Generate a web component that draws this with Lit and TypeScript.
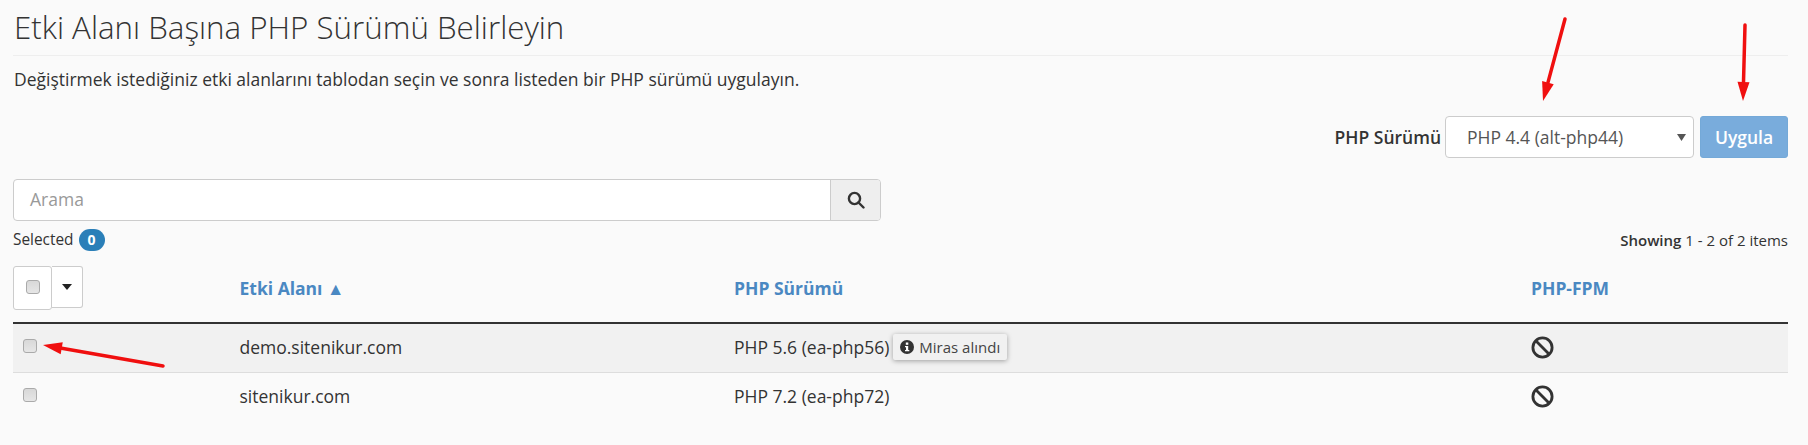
import { LitElement, html, css, svg } from 'lit';
import { customElement, state } from 'lit/decorators.js';

interface DomainRow {
  domain: string;
  version: string;
  inherited: boolean;
}

const ROWS: DomainRow[] = [
  { domain: 'demo.sitenikur.com', version: 'PHP 5.6 (ea-php56)', inherited: true },
  { domain: 'sitenikur.com', version: 'PHP 7.2 (ea-php72)', inherited: false },
];

// red annotation arrows drawn on top of the screenshot: [x1, y1, x2, y2] tail to tip
const ARROWS = [
  [1565, 19, 1543, 101],
  [1745, 25, 1743, 101],
  [163, 366, 43, 345],
];

@customElement('app-root')
export class AppRoot extends LitElement {
  static styles = css`
    :host {
      display: block;
      position: relative;
      height: 445px;
      overflow: hidden;
      background: #fafafa;
      color: #333;
      font-family: 'Open Sans', 'Noto Sans', sans-serif;
      font-size: 17.5px;
      line-height: 22px;
    }

    .page {
      padding: 0 20px 0 13px;
    }

    h1 {
      margin: 0;
      padding: 7px 0 0 1px;
      height: 48px;
      font-size: 31.3px;
      line-height: 40px;
      font-weight: 300;
      border-bottom: 1px solid #eee;
      box-sizing: content-box;
    }

    .intro {
      margin: 12px 0 0 1px;
      height: 22px;
    }

    .apply-row {
      display: flex;
      justify-content: flex-end;
      align-items: center;
      margin-top: 26px;
      height: 42px;
    }

    .apply-row label {
      font-weight: 600;
      margin-right: 4px;
    }

    .select-wrap {
      position: relative;
      display: block;
      margin-right: 6px;
    }

    select {
      display: block;
      appearance: none;
      width: 249px;
      height: 42px;
      padding: 0 20px 0 21px;
      border: 1px solid #ccc;
      border-radius: 4px;
      background: #fff;
      color: #555;
      font: inherit;
    }

    .select-wrap svg {
      position: absolute;
      right: 8px;
      top: 18px;
    }

    .apply {
      width: 88px;
      height: 42px;
      border: 1px solid #74a9d8;
      border-radius: 3px;
      background: #79acdc;
      color: #fff;
      font: inherit;
      font-weight: 600;
      padding: 0;
    }

    .search {
      display: flex;
      width: 868px;
      height: 42px;
      margin-top: 21px;
      border: 1px solid #ccc;
      border-radius: 4px;
      box-sizing: border-box;
      background: #fff;
    }

    .search .field {
      flex: 1;
      padding: 0 16px;
      line-height: 38px;
      color: #999;
    }

    .search .go {
      display: flex;
      align-items: center;
      justify-content: center;
      width: 49px;
      border-left: 1px solid #ccc;
      border-radius: 0 3px 3px 0;
      background: #eee;
    }

    .status {
      display: flex;
      justify-content: space-between;
      align-items: center;
      height: 22px;
      margin-top: 8px;
      font-size: 15px;
    }

    .status b {
      font-weight: 600;
    }

    .selected {
      display: flex;
      align-items: center;
      gap: 5px;
      font-size: 15.4px;
    }

    .badge {
      display: inline-block;
      width: 26px;
      height: 22px;
      border-radius: 11px;
      background: #2a7fb8;
      color: #fff;
      font-size: 14px;
      font-weight: 700;
      line-height: 22px;
      text-align: center;
    }

    .grid-row {
      display: grid;
      grid-template-columns: 226.5px 494.5px 797px 1fr;
    }

    .head {
      height: 73px;
      padding-top: 15px;
      box-sizing: border-box;
      border-bottom: 2px solid #333;
    }

    .head a {
      display: block;
      margin-top: 11px;
      color: #4a88c2;
      font-weight: 700;
      text-decoration: none;
    }

    .bulk {
      display: flex;
      width: 70px;
      height: 42px;
    }

    .bulk .all {
      display: flex;
      justify-content: center;
      padding-top: 13px;
      width: 39px;
      height: 44px;
      box-sizing: border-box;
      border: 1px solid #ccc;
      border-radius: 3px;
      background: #fff;
    }

    .bulk .menu {
      display: flex;
      align-items: center;
      justify-content: center;
      width: 31px;
      height: 42px;
      box-sizing: border-box;
      border: 1px solid #ccc;
      border-left: 0;
      border-radius: 0 3px 3px 0;
      background: #fff;
    }

    .row {
      height: 49px;
      box-sizing: border-box;
      border-bottom: 1px solid #ddd;
      align-items: start;
    }

    .row.shaded {
      background: #f1f1f1;
    }

    .row.last {
      border-bottom: 0;
    }

    .row > div {
      padding-top: 12px;
    }

    .row .tick {
      padding: 15px 0 0 10px;
    }

    input[type='checkbox'] {
      display: block;
      appearance: none;
      width: 14px;
      height: 14px;
      margin: 0;
      border: 1px solid #aaa;
      border-radius: 3px;
      background: linear-gradient(#d8d8d8, #e6e6e6);
    }

    .version {
      display: flex;
      align-items: flex-start;
    }

    .tag {
      position: relative;
      top: -2px;
      display: flex;
      align-items: center;
      gap: 5px;
      height: 26px;
      margin-left: 4px;
      padding: 0 7px;
      border-radius: 2px;
      background: #f1f1f1;
      box-shadow: 0 1px 5px rgba(0, 0, 0, 0.35);
      font-size: 15px;
      color: #444;
    }

    .fpm svg {
      display: block;
    }

    .arrows {
      position: absolute;
      left: 0;
      top: 0;
      pointer-events: none;
    }
  `;

  @state()
  private _selected = 0;

  private _renderArrow([x1, y1, x2, y2]: number[]) {
    const len = Math.hypot(x2 - x1, y2 - y1);
    const ux = (x2 - x1) / len;
    const uy = (y2 - y1) / len;
    // head is 19px long and 12px wide, with the shaft stopping at its base
    const bx = x2 - ux * 19;
    const by = y2 - uy * 19;
    const head = `${x2},${y2} ${bx - uy * 6},${by + ux * 6} ${bx + uy * 6},${by - ux * 6}`;
    return svg`
      <line x1=${x1} y1=${y1} x2=${bx} y2=${by} stroke="#f00f0f" stroke-width="3.5" stroke-linecap="round"></line>
      <polygon points=${head} fill="#f00f0f"></polygon>
    `;
  }

  private _renderRow(row: DomainRow, index: number) {
    const rowClass = `grid-row row ${index === 0 ? 'shaded' : 'last'}`;
    return html`
      <div class=${rowClass}>
        <div class="tick"><input type="checkbox" aria-label=${row.domain} /></div>
        <div>${row.domain}</div>
        <div class="version">
          ${row.version}
          ${row.inherited
            ? html`<span class="tag">
                <svg width="14" height="14" viewBox="0 0 14 14">
                  <circle cx="7" cy="7" r="7" fill="#333"></circle>
                  <rect x="5.8" y="2.5" width="2.5" height="2.3" fill="#fff"></rect>
                  <path d="M5 6h3.2v4H9.3v1.3H5V10h1V7.2H5z" fill="#fff"></path>
                </svg>
                Miras alındı
              </span>`
            : ''}
        </div>
        <div class="fpm">
          <svg width="23" height="23" viewBox="0 0 23 23" fill="none" stroke="#333" stroke-width="2.8">
            <circle cx="11.5" cy="11.5" r="9.6"></circle>
            <path d="M4.8 4.8l13.4 13.4"></path>
          </svg>
        </div>
      </div>
    `;
  }

  render() {
    return html`
      <div class="page">
        <h1>Etki Alanı Başına PHP Sürümü Belirleyin</h1>
        <p class="intro">Değiştirmek istediğiniz etki alanlarını tablodan seçin ve sonra listeden bir PHP sürümü uygulayın.</p>

        <div class="apply-row">
          <label for="version">PHP Sürümü</label>
          <span class="select-wrap">
            <select id="version"><option>PHP 4.4 (alt-php44)</option></select>
            <svg width="9" height="7" viewBox="0 0 9 7"><path d="M0 0h9L4.5 7z" fill="#555"></path></svg>
          </span>
          <button class="apply">Uygula</button>
        </div>

        <div class="search">
          <div class="field">Arama</div>
          <div class="go">
            <svg width="18" height="18" viewBox="0 0 18 18" fill="none" stroke="#333" stroke-width="2.4">
              <circle cx="7.5" cy="7.5" r="5.6"></circle>
              <path d="M11.5 11.5l5 5" stroke-linecap="round"></path>
            </svg>
          </div>
        </div>

        <div class="status">
          <div class="selected">Selected <span class="badge">${this._selected}</span></div>
          <div><b>Showing</b> 1 - 2 of 2 items</div>
        </div>

        <div class="grid-row head">
          <div class="bulk">
            <div class="all"><input type="checkbox" aria-label="Tümünü seç" /></div>
            <div class="menu">
              <svg width="10" height="6" viewBox="0 0 10 6"><path d="M0 0h10L5 6z" fill="#222"></path></svg>
            </div>
          </div>
          <a href="#">Etki Alanı ▲</a>
          <a href="#">PHP Sürümü</a>
          <a href="#">PHP-FPM</a>
        </div>
        ${ROWS.map((row, index) => this._renderRow(row, index))}
      </div>

      <svg class="arrows" width="1808" height="445">
        ${ARROWS.map((arrow) => this._renderArrow(arrow))}
      </svg>
    `;
  }
}

declare global {
  interface HTMLElementTagNameMap {
    'app-root': AppRoot;
  }
}
